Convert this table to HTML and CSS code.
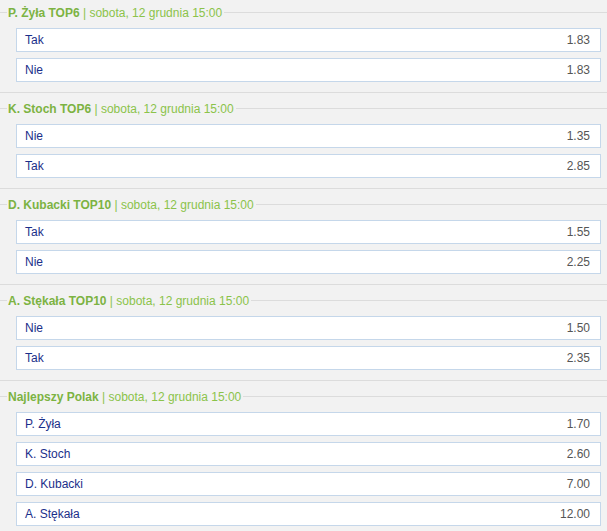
FILE: index.html
```html
<!DOCTYPE html>
<html lang="pl">
<head>
<meta charset="utf-8">
<link rel="stylesheet" href="styles.css">
</head>
<body>
<div class="markets">
  <section class="market">
    <div class="market-head"><span class="title"><b>P. Żyła TOP6</b> | sobota, 12 grudnia 15:00</span></div>
    <div class="outcomes">
      <div class="outcome"><span class="name">Tak</span><span class="odds">1.83</span></div>
      <div class="outcome"><span class="name">Nie</span><span class="odds">1.83</span></div>
    </div>
  </section>
  <section class="market">
    <div class="market-head"><span class="title"><b>K. Stoch TOP6</b> | sobota, 12 grudnia 15:00</span></div>
    <div class="outcomes">
      <div class="outcome"><span class="name">Nie</span><span class="odds">1.35</span></div>
      <div class="outcome"><span class="name">Tak</span><span class="odds">2.85</span></div>
    </div>
  </section>
  <section class="market">
    <div class="market-head"><span class="title"><b>D. Kubacki TOP10</b> | sobota, 12 grudnia 15:00</span></div>
    <div class="outcomes">
      <div class="outcome"><span class="name">Tak</span><span class="odds">1.55</span></div>
      <div class="outcome"><span class="name">Nie</span><span class="odds">2.25</span></div>
    </div>
  </section>
  <section class="market">
    <div class="market-head"><span class="title"><b>A. Stękała TOP10</b> | sobota, 12 grudnia 15:00</span></div>
    <div class="outcomes">
      <div class="outcome"><span class="name">Nie</span><span class="odds">1.50</span></div>
      <div class="outcome"><span class="name">Tak</span><span class="odds">2.35</span></div>
    </div>
  </section>
  <section class="market">
    <div class="market-head"><span class="title"><b>Najlepszy Polak</b> | sobota, 12 grudnia 15:00</span></div>
    <div class="outcomes">
      <div class="outcome"><span class="name">P. Żyła</span><span class="odds">1.70</span></div>
      <div class="outcome"><span class="name">K. Stoch</span><span class="odds">2.60</span></div>
      <div class="outcome"><span class="name">D. Kubacki</span><span class="odds">7.00</span></div>
      <div class="outcome"><span class="name">A. Stękała</span><span class="odds">12.00</span></div>
    </div>
  </section>
</div>
</body>
</html>
```
FILE: styles.css
```css
html, body {
  margin: 0;
  padding: 0;
  background: #f2f2f2;
  font-family: "Liberation Sans", Arial, sans-serif;
  font-size: 12px;
}
.markets {
  margin-top: -4px;
}
.market {
  border-top: 1px solid #dcdcdc;
  padding-bottom: 10px;
}
.market-head {
  height: 31px;
  display: flex;
  align-items: center;
}
.market-head::before,
.market-head::after {
  content: "";
  height: 1px;
  background: #dcdcdc;
}
.market-head::before {
  width: 7px;
}
.market-head::after {
  flex: 1;
}
.title {
  padding: 0 2px 0 1px;
  color: #8bc34a;
  white-space: nowrap;
  line-height: 14px;
}
.title b {
  color: #7cb342;
  font-weight: bold;
}
.outcomes {
  display: flex;
  flex-direction: column;
  gap: 6px;
  margin: 0 6px 0 16px;
}
.outcome {
  box-sizing: border-box;
  height: 24px;
  background: #fff;
  border: 1px solid #c5d7ea;
  display: flex;
  align-items: center;
  justify-content: space-between;
  padding: 0 10px 0 8px;
}
.name {
  color: #1b2f8a;
}
.odds {
  color: #555;
}
```
